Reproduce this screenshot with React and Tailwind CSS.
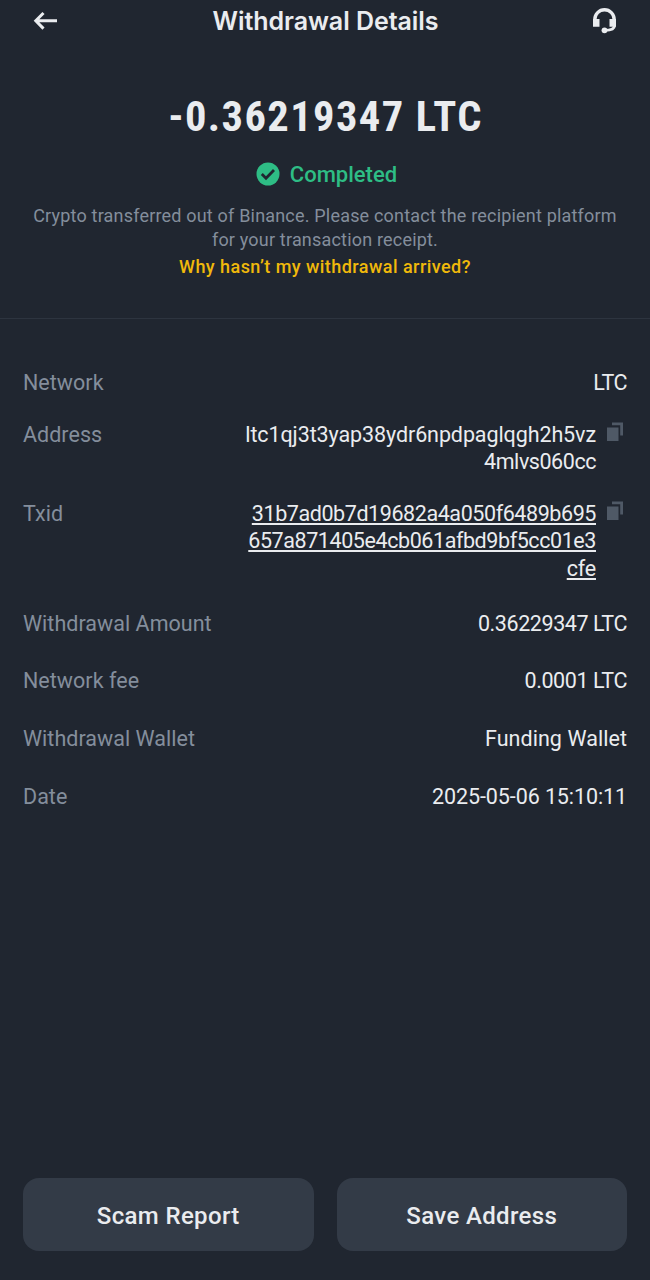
import React from 'react';

const ROWS = [
  { label: 'Withdrawal Amount', value: '0.36229347 LTC', tracking: 'tracking-[-0.42px]' },
  { label: 'Network fee', value: '0.0001 LTC', tracking: 'tracking-[-0.42px]' },
  { label: 'Withdrawal Wallet', value: 'Funding Wallet', tracking: 'tracking-[0.05px]' },
  { label: 'Date', value: '2025-05-06 15:10:11', tracking: 'tracking-[-0.1px]' },
];

const ADDRESS = [
  { text: 'ltc1qj3t3yap38ydr6npdpaglqgh2h5vz', tracking: 'tracking-[-0.1px]' },
  { text: '4mlvs060cc', tracking: 'tracking-[-0.45px]' },
];

const TXID = [
  { text: '31b7ad0b7d19682a4a050f6489b695', tracking: 'tracking-[-0.42px]' },
  { text: '657a871405e4cb061afbd9bf5cc01e3', tracking: 'tracking-[-0.42px]' },
  { text: 'cfe', tracking: 'tracking-[-0.2px]' },
];

export default function App() {
  return (
    <div className="flex h-[1280px] w-[650px] flex-col bg-[#202630] font-['Roboto',sans-serif] text-[#eaecef]">
      <header className="flex h-[42px] items-center justify-between px-[33px]">
        <button type="button" aria-label="Back">
          <BackIcon />
        </button>
        <h1 className="font-['Inter',sans-serif] text-[25px] font-semibold leading-8 tracking-[-0.05px]">
          Withdrawal Details
        </h1>
        <button type="button" aria-label="Support">
          <SupportIcon />
        </button>
      </header>

      <section className="flex h-[277px] flex-col items-center border-b border-[#2d343f] pt-[49px]">
        <div className="pl-px text-[42.5px] font-bold leading-[52px] tracking-[1.4px] [font-stretch:75%]">
          -0.36219347 LTC
        </div>
        <div className="mt-[17px] flex h-7 items-center gap-[10px] pl-[3px] text-[#2ebd85]">
          <CheckIcon />
          <span className="pt-px text-[22px] font-medium leading-7">Completed</span>
        </div>
        <p className="mt-4 text-center text-[18px] leading-6 tracking-[0.19px] text-[#848e9c]">
          Crypto transferred out of Binance. Please contact the recipient platform
          <br />
          for your transaction receipt.
        </p>
        <a className="mt-[3px] text-[18px] font-medium leading-6 tracking-[0.45px] text-[#f0b90b]">
          Why hasn’t my withdrawal arrived?
        </a>
      </section>

      <section className="flex flex-col px-[23px] pt-[50px] text-[21.5px] leading-[27.5px]">
        <Row label="Network">
          <span className="tracking-[-0.5px]">LTC</span>
        </Row>
        <div className="mt-6">
          <Row label="Address">
            <CopyValue lines={ADDRESS} />
          </Row>
        </div>
        <div className="mt-6">
          <Row label="Txid">
            <CopyValue lines={TXID} underline />
          </Row>
        </div>
        <div className="mt-[27.5px] flex flex-col gap-[30.2px]">
          {ROWS.map((r) => (
            <Row key={r.label} label={r.label}>
              <span className={r.tracking}>{r.value}</span>
            </Row>
          ))}
        </div>
      </section>

      <footer className="mt-auto flex gap-[23px] px-[23px] pb-[29px]">
        <FooterButton>Scam Report</FooterButton>
        <FooterButton>Save Address</FooterButton>
      </footer>
    </div>
  );
}

function Row({ label, children }) {
  return (
    <div className="flex items-start justify-between">
      <span className="tracking-[0.03px] text-[#848e9c]">{label}</span>
      {children}
    </div>
  );
}

function CopyValue({ lines, underline }) {
  return (
    <div className="flex items-start gap-[10px] pr-[3px]">
      <div
        className={`flex flex-col items-end ${
          underline ? 'underline decoration-[1.5px] underline-offset-[2px]' : ''
        }`}
      >
        {lines.map((line) => (
          <span key={line.text} className={line.tracking}>{line.text}</span>
        ))}
      </div>
      <button type="button" aria-label="Copy">
        <CopyIcon />
      </button>
    </div>
  );
}

function FooterButton({ children }) {
  return (
    <button
      type="button"
      className="h-[73px] flex-1 rounded-[16px] bg-[#333b47] pt-[2px] text-[24px] font-medium tracking-[0.35px]"
    >
      {children}
    </button>
  );
}

function BackIcon() {
  return (
    <svg className="block" width="26" height="20" viewBox="0 0 26 20" fill="none" stroke="currentColor" strokeWidth="3">
      <path d="M10.500 2 2.800 9.800l7.700 7.800M3.500 9.800H24" />
    </svg>
  );
}

function SupportIcon() {
  return (
    <svg className="block" width="25" height="26" viewBox="0 0 25 26" fill="none">
      <path d="M2.800 13v-1.500a9.700 9.700 0 0 1 19.400 0V13" stroke="currentColor" strokeWidth="3.400" />
      <path d="M1 11h6.500v7.800H1zM17.500 11H24v7.800h-6.500z" fill="currentColor" />
      <path d="M22.500 17.500c0 3.300-3.500 4.800-9.500 4.800" stroke="currentColor" strokeWidth="2.800" />
      <circle cx="12.500" cy="22.300" r="2.900" fill="currentColor" />
    </svg>
  );
}

function CheckIcon() {
  return (
    <svg className="block" width="24" height="24" viewBox="0 0 24 24" fill="none">
      <circle cx="12" cy="12" r="11.500" fill="currentColor" />
      <path d="m5.800 12 4.200 4.200 8-8.200" stroke="#202630" strokeWidth="2.800" />
    </svg>
  );
}

function CopyIcon() {
  return (
    <svg className="mt-px block" width="18" height="20" viewBox="0 0 18 20" fill="#4f5966">
      <path d="M6 .500h11v13h-2.800V3.300H6z" />
      <path d="M1 5.500h11.500V19H1z" />
    </svg>
  );
}
